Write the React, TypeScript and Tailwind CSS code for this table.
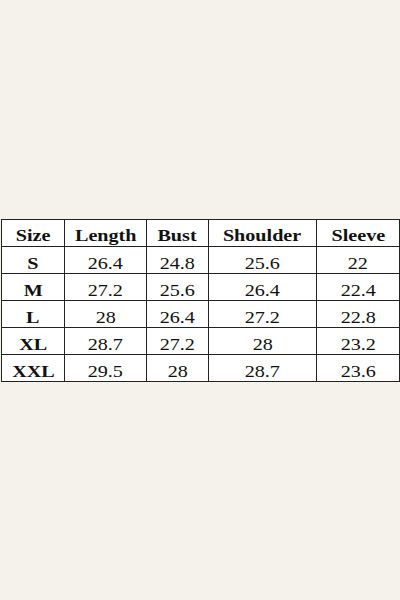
const rows = [
  ['S', '26.4', '24.8', '25.6', '22'],
  ['M', '27.2', '25.6', '26.4', '22.4'],
  ['L', '28', '26.4', '27.2', '22.8'],
  ['XL', '28.7', '27.2', '28', '23.2'],
  ['XXL', '29.5', '28', '28.7', '23.6'],
];

const headers = ['Size', 'Length', 'Bust', 'Shoulder', 'Sleeve'];
const widths = ['w-[63px]', 'w-[82px]', 'w-[62px]', 'w-[108px]', 'w-[83px]'];

export default function App() {
  return (
    <div className="flex h-[600px] w-[400px] items-center bg-[#f5f2eb] pl-px">
      <table className="table-fixed border-collapse bg-white font-['Liberation_Serif',serif] text-[17.5px] leading-none text-[#111]">
        <thead>
          <tr>
            {headers.map((h, i) => (
              <th
                key={h}
                className={`${widths[i]} h-[27px] border-[1.5px] border-[#222] p-0 pb-[1px] text-center align-bottom font-bold`}
              >
                <span className="inline-block scale-x-[1.15]">{h}</span>
              </th>
            ))}
          </tr>
        </thead>
        <tbody>
          {rows.map((r) => (
            <tr key={r[0]}>
              {r.map((c, i) => (
                <td
                  key={i}
                  className={`h-[27px] border-[1.5px] border-[#222] p-0 text-center align-bottom ${i === 0 ? 'font-bold' : ''}`}
                >
                  <span className="inline-block scale-x-[1.15]">{c}</span>
                </td>
              ))}
            </tr>
          ))}
        </tbody>
      </table>
    </div>
  );
}
